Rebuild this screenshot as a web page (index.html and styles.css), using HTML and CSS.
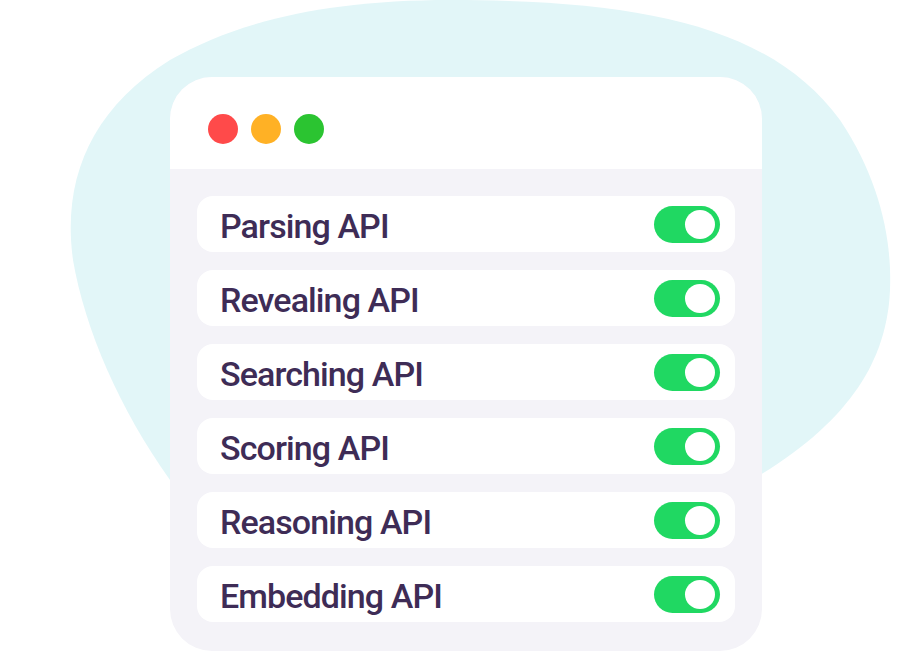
FILE: index.html
```html
<!DOCTYPE html>
<html lang="en">
<head>
    <meta charset="UTF-8">
    <meta name="viewport" content="width=device-width, initial-scale=1.0">
    <title>API Toggles</title>
    <link rel="stylesheet" href="styles.css">
</head>
<body>
    <div class="stage">
        <svg class="blob" width="902" height="671" viewBox="0 0 902 671" aria-hidden="true">
            <path d="M450 0 C640 0 770 25 840 120 C880 180 892 240 890 290 C887 360 850 420 760 475 L400 520 L170 480 C120 410 85 330 73 260 C62 180 90 110 170 60 C240 20 330 0 450 0 Z" fill="#e2f6f8"/>
        </svg>

        <div class="window">
            <div class="window-header">
                <span class="dot red"></span>
                <span class="dot yellow"></span>
                <span class="dot green"></span>
            </div>

            <div class="window-body">
                <div class="api-row">
                    <span class="api-name">Parsing API</span>
                    <span class="toggle on"><span class="knob"></span></span>
                </div>
                <div class="api-row">
                    <span class="api-name">Revealing API</span>
                    <span class="toggle on"><span class="knob"></span></span>
                </div>
                <div class="api-row">
                    <span class="api-name">Searching API</span>
                    <span class="toggle on"><span class="knob"></span></span>
                </div>
                <div class="api-row">
                    <span class="api-name">Scoring API</span>
                    <span class="toggle on"><span class="knob"></span></span>
                </div>
                <div class="api-row">
                    <span class="api-name">Reasoning API</span>
                    <span class="toggle on"><span class="knob"></span></span>
                </div>
                <div class="api-row">
                    <span class="api-name">Embedding API</span>
                    <span class="toggle on"><span class="knob"></span></span>
                </div>
            </div>
        </div>
    </div>
</body>
</html>
```

FILE: styles.css
```css
body {
    margin: 0;
    background: #ffffff;
    font-family: 'Roboto', 'Liberation Sans', sans-serif;
}

.stage {
    position: relative;
    width: 902px;
    height: 671px;
    padding: 77px 0 0 170px;
    box-sizing: border-box;
    overflow: hidden;
}

/* decorative background shape */
.blob {
    position: absolute;
    top: 0;
    left: 0;
}

.window {
    position: relative;
    width: 592px;
    height: 574px;
    border-radius: 42px;
    background: #f4f3f8;
    overflow: hidden;
    display: flex;
    flex-direction: column;
}

.window-header {
    background: #ffffff;
    height: 92px;
    box-sizing: border-box;
    padding: 37px 0 0 38px;
    display: flex;
    gap: 13px;
}

.dot {
    width: 30px;
    height: 30px;
    border-radius: 50%;
}

.dot.red {
    background: #ff4a4a;
}

.dot.yellow {
    background: #ffb125;
}

.dot.green {
    background: #2bc431;
}

.window-body {
    padding: 27px 27px 0 27px;
    display: flex;
    flex-direction: column;
    gap: 18px;
}

.api-row {
    height: 56px;
    background: #ffffff;
    border-radius: 16px;
    display: flex;
    align-items: center;
    justify-content: space-between;
    padding: 0 15px 0 23px;
}

.api-name {
    font-size: 34px;
    font-weight: 500;
    color: #3e2c56;
    letter-spacing: -0.9px;
    padding-top: 3px;
}

.toggle {
    width: 66px;
    height: 37px;
    border-radius: 19px;
    background: #cfd2da;
    box-sizing: border-box;
    padding: 4px 5px;
    display: flex;
}

.toggle.on {
    background: #20d862;
    justify-content: flex-end;
}

.knob {
    width: 30px;
    height: 29px;
    border-radius: 50%;
    background: #ffffff;
}
```
